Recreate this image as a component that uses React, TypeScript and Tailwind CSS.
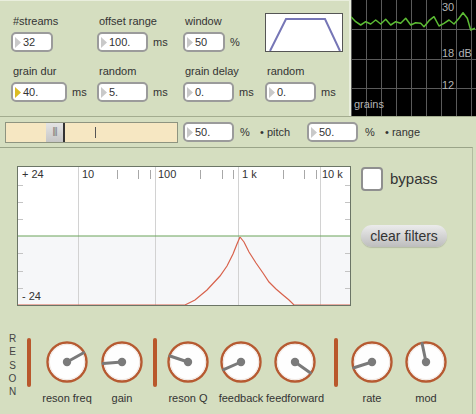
import React from 'react';

const NumBox: React.FC<{ value: string; w: string; hot?: boolean }> = ({ value, w, hot = false }) => (
  <div className={`${w} h-[20px] flex items-center rounded-[5px] border-2 border-[#9b9b9b] bg-white shrink-0`}>
    <svg width="6" height="11" viewBox="0 0 6 11" className="ml-[2px] shrink-0">
      <path d="M0 0 L6 5.5 L0 11 Z" fill={hot ? '#dcbc22' : '#c9c9c9'} />
    </svg>
    <span className="ml-[2px] text-[11px] leading-none text-[#333]">{value}</span>
  </div>
);

const Cell: React.FC<{ label: string; value: string; box: string; unit?: string; w: string; hot?: boolean }> = ({
  label, value, box, unit, w, hot,
}) => (
  <div className={`${w} shrink-0 flex flex-col`}>
    <div className="h-[14px] leading-[14px] pl-[2px] text-[11px] text-[#333] whitespace-nowrap">{label}</div>
    <div className="mt-[4px] flex items-center">
      <NumBox value={value} w={box} hot={hot} />
      {unit && <span className="ml-[5px] text-[11px] text-[#333]">{unit}</span>}
    </div>
  </div>
);

const wave = [
  [0, 16.7], [4.7, 21.7], [9.7, 25], [14.7, 21.7], [19.7, 24], [24.7, 20], [29.7, 24], [34.7, 19.3],
  [39.7, 25], [44.7, 21.7], [49.7, 23.3], [54.7, 18.3], [59.7, 25], [64.7, 22.7], [69.7, 23.3], [73, 26.7],
  [78, 20.7], [83, 16.7], [88, 26], [93, 23.3], [98, 20], [103, 24], [108, 18.3], [112, 12.7],
  [116.3, 18.3], [119.7, 30], [124, 28.3],
].map(p => p.join(',')).join(' ');

const Scope = () => (
  <div className="flex-1 bg-black">
    <svg width="125" height="116" viewBox="0 0 125 116" className="block">
      {[0, 15, 30, 45, 60, 75, 90, 105, 120].map(x => (
        <line key={x} x1={x + 0.5} y1="0" x2={x + 0.5} y2="116" stroke="#5a5a5a" strokeWidth="1" />
      ))}
      {[29, 59, 88].map(y => (
        <line key={y} x1="0" y1={y + 0.5} x2="125" y2={y + 0.5} stroke="#5a5a5a" strokeWidth="1" />
      ))}
      <polyline points={wave} fill="none" stroke="#5cbc34" strokeWidth="1.5" strokeLinejoin="round" />
      <g fontFamily="'Liberation Sans', Arial, sans-serif" fontSize="11" fill="#b4b4b4">
        <text x="91" y="11">30</text>
        <text x="91" y="57">18</text>
        <text x="107.5" y="57">dB</text>
        <text x="91" y="89">12</text>
        <text x="3" y="108">grains</text>
      </g>
    </svg>
  </div>
);

const Graph = () => {
  const rise = '168,139 178,134 190,124 203,110 210,100 216,88 220,78 223,71';
  const fall = '223,71 227,76 232,86 239,97 246,107 252,116 259,123 266,129 272,134 277,139';
  return (
    <svg width="334" height="140" viewBox="0 0 334 140" className="block shrink-0">
      <rect x="0" y="0" width="334" height="140" fill="#ffffff" />
      <rect x="0" y="70" width="334" height="70" fill="#f6f7f9" />
      {[61, 138, 221, 303].map(x => (
        <line key={x} x1={x + 0.5} y1="0" x2={x + 0.5} y2="140" stroke="#d2d2d2" strokeWidth="1" />
      ))}
      {[100, 121, 133, 183, 205, 216, 266, 287, 299].map(x => (
        <line key={x} x1={x + 0.5} y1="4" x2={x + 0.5} y2="13" stroke="#a8a8a8" strokeWidth="1" />
      ))}
      {[19, 36, 53, 87, 105, 122].map(y => (
        <g key={y}>
          <line x1="1" y1={y + 0.5} x2="6" y2={y + 0.5} stroke="#c4c4c4" strokeWidth="1" />
          <line x1="328" y1={y + 0.5} x2="333" y2={y + 0.5} stroke="#c4c4c4" strokeWidth="1" />
        </g>
      ))}
      <line x1="0" y1="70" x2="334" y2="70" stroke="#6aa45a" strokeWidth="1.2" />
      <polyline points={`0,139 ${rise}`} fill="none" stroke="#d8624c" strokeWidth="1.2" />
      <polyline points={`${fall} 334,139`} fill="none" stroke="#d8624c" strokeWidth="1.2" />
      <g fontFamily="'Liberation Sans', Arial, sans-serif" fontSize="11" fill="#333">
        <text x="5" y="12">+ 24</text>
        <text x="65" y="12">10</text>
        <text x="141" y="12">100</text>
        <text x="225" y="12">1 k</text>
        <text x="305" y="12">10 k</text>
        <text x="5" y="134">- 24</text>
      </g>
      <rect x="0.5" y="0.5" width="333" height="139" fill="none" stroke="#6b7566" strokeWidth="1" />
    </svg>
  );
};

const Knob: React.FC<{ label: string; dx: number; dy: number; ml: string }> = ({ label, dx, dy, ml }) => {
  const len = Math.hypot(dx, dy);
  const ex = 21 + (dx / len) * 19;
  const ey = 21 + (dy / len) * 19;
  return (
    <div className={`${ml} w-[42px] mt-[9px] shrink-0 flex flex-col items-center`}>
      <svg width="42" height="42" viewBox="0 0 42 42" className="block">
        <circle cx="21" cy="21" r="19.5" fill="#fefefe" stroke="#b65a31" strokeWidth="2.4" />
        <circle cx="21" cy="21" r="17.6" fill="none" stroke="#f0e6e0" strokeWidth="1" />
        <line x1="21" y1="21" x2={ex} y2={ey} stroke="#7a7a7a" strokeWidth="3" strokeLinecap="round" />
        <circle cx="21" cy="21" r="4.2" fill="#7a7a7a" />
      </svg>
      <div className="mt-[8px] h-[14px] leading-[14px] text-[11px] text-[#333] whitespace-nowrap">{label}</div>
    </div>
  );
};

const Bar: React.FC<{ ml: string }> = ({ ml }) => (
  <div className={`${ml} mt-[6px] w-[4px] h-[49px] rounded-full bg-[#b9582c] shrink-0`} />
);

export default function App() {
  return (
    <div className="w-[476px] h-[414px] overflow-hidden bg-[#d5dec0] flex flex-col font-['Liberation_Sans',Arial,sans-serif] text-[#333]">
      {/* top: grain params + scope */}
      <div className="h-[117px] flex border-b border-[#a3ac8f] shrink-0">
        <div className="w-[351px] border-r-2 border-[#e9eedd] border-t border-t-[#e9eedd] pl-[11px] pt-[13px] flex flex-col">
          <div className="flex">
            <Cell w="w-[86px]" label="#streams" value="32" box="w-[42px]" />
            <Cell w="w-[86px]" label="offset range" value="100." box="w-[51px]" unit="ms" />
            <Cell w="w-[82px]" label="window" value="50" box="w-[42px]" unit="%" />
            <div className="-mt-[1px] w-[78px] h-[39px] border border-[#555] bg-white shrink-0">
              <svg width="76" height="37" viewBox="0 0 76 37" className="block">
                <polyline points="4,37 20,5 59,5 74,37" fill="none" stroke="#7676b6" strokeWidth="2" />
              </svg>
            </div>
          </div>
          <div className="flex mt-[12px]">
            <Cell w="w-[86px]" label="grain dur" value="40." box="w-[56px]" unit="ms" hot />
            <Cell w="w-[86px]" label="random" value="5." box="w-[51px]" unit="ms" />
            <Cell w="w-[82px]" label="grain delay" value="0." box="w-[51px]" unit="ms" />
            <Cell w="w-[80px]" label="random" value="0." box="w-[51px]" unit="ms" />
          </div>
        </div>
        <Scope />
      </div>

      {/* pitch slider row */}
      <div className="h-[30px] flex items-center pl-[5px] shrink-0">
        <div className="w-[173px] h-[21px] bg-[#f6e7c2] border border-[#8e9480] flex items-stretch shrink-0">
          <div className="w-[40px]" />
          <div className="w-[19px] flex items-center justify-center bg-gradient-to-b from-[#e4e4e4] to-[#c6c6c6] border-r-2 border-[#333] text-[9px] tracking-[-1px] text-[#777]">
            |||
          </div>
          <div className="w-[30px]" />
          <div className="w-px h-[11px] bg-[#555] self-center" />
        </div>
        <div className="ml-[5px]"><NumBox value="50." w="w-[51px]" /></div>
        <span className="ml-[6px] w-[20px] text-[11px]">%</span>
        <span className="w-[47px] text-[11px] whitespace-nowrap">• pitch</span>
        <NumBox value="50." w="w-[51px]" />
        <span className="ml-[7px] w-[20px] text-[11px]">%</span>
        <span className="text-[11px] whitespace-nowrap">• range</span>
      </div>

      {/* filter + reson */}
      <div className="flex-1 w-[473px] border-t border-[#9aa488] border-r border-r-[#b3bca0] flex flex-col">
        <div className="flex pl-[17px] pt-[18px]">
          <Graph />
          <div className="ml-[10px] pt-[1px] flex flex-col items-start">
            <div className="flex items-center">
              <div className="w-[22px] h-[24px] rounded-[4px] border-2 border-[#8f8f8f] bg-white" />
              <span className="ml-[7px] text-[15px] text-[#333]">bypass</span>
            </div>
            <div className="mt-[34px] w-[86px] h-[22px] rounded-full bg-gradient-to-b from-[#ececec] to-[#bdbdbd] flex items-center justify-center text-[14px] text-[#333] shadow-[0_1px_1px_rgba(0,0,0,0.15)]">
              clear filters
            </div>
          </div>
        </div>

        <div className="flex items-start pl-[8px] mt-[26px]">
          <div className="w-[9px] flex flex-col items-center text-[10px] leading-[13.25px] text-[#444]">
            {'RESON'.split('').map((c, i) => <span key={i}>{c}</span>)}
          </div>
          <Bar ml="ml-[10px]" />
          <Knob ml="ml-[15px]" label="reson freq" dx={18} dy={-10} />
          <Knob ml="ml-[13px]" label="gain" dx={-20} dy={1.7} />
          <Bar ml="ml-[10px]" />
          <Knob ml="ml-[10px]" label="reson Q" dx={-20} dy={-6.7} />
          <Knob ml="ml-[11px]" label="feedback" dx={-18} dy={8} />
          <Knob ml="ml-[12px]" label="feedforward" dx={17} dy={12} />
          <Bar ml="ml-[18px]" />
          <Knob ml="ml-[13px]" label="rate" dx={-19} dy={6} />
          <Knob ml="ml-[12px]" label="mod" dx={-4} dy={-19} />
        </div>
      </div>
    </div>
  );
}
